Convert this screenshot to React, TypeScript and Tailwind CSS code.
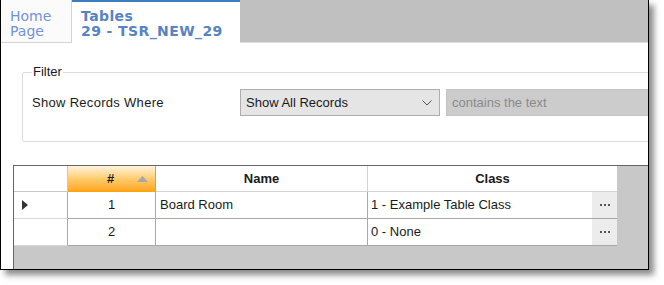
import React from 'react';

const rows = [
  { id: 1, name: 'Board Room', cls: '1 - Example Table Class', current: true },
  { id: 2, name: '', cls: '0 - None', current: false },
];

function Dots() {
  return (
    <div className="w-[25px] h-full bg-[#ececec] flex items-center justify-center gap-[2px]">
      <span className="w-[2px] h-[2px] bg-[#555]" />
      <span className="w-[2px] h-[2px] bg-[#555]" />
      <span className="w-[2px] h-[2px] bg-[#555]" />
    </div>
  );
}

export default function App() {
  return (
    <div className="w-[664px] h-[285px] bg-white">
      <div className="w-[649px] h-[270px] border-l border-r border-b border-black bg-white overflow-hidden flex flex-col shadow-[5px_5px_6px_rgba(0,0,0,0.45)] font-['Liberation_Sans',Arial,sans-serif] text-[13px] text-[#1a1a1a]">
        {/* tabs */}
        <div className="flex h-[43px] shrink-0 font-['DejaVu_Sans',Verdana,sans-serif] text-[14px] leading-[15px]">
          <div className="w-[71px] bg-[#fbfbfb] border-r border-b border-[#d4d4d4] pl-[9px] pt-[9px] text-[#7393d6]">
            <div>Home</div>
            <div>Page</div>
          </div>
          <div className="w-[168px] bg-white border-t-2 border-[#3d7cc0] pl-[9px] pt-[7px] font-bold text-[#5683c2] tracking-[0.4px]">
            <div>Tables</div>
            <div>29 - TSR_NEW_29</div>
          </div>
          <div className="flex-1 bg-[#c0c0c0] border-b border-[#dedede]" />
        </div>

        {/* filter */}
        <fieldset className="ml-[21px] mt-[22px] w-[700px] h-[77px] border border-[#dcdcdc] rounded-[2px] pl-[9px] shrink-0">
          <legend className="px-[1px] leading-[14px]">Filter</legend>
          <div className="flex items-center mt-[10px]">
            <span className="w-[208px] tracking-[0.3px]">Show Records Where</span>
            <div className="w-[200px] h-[27px] bg-[#e5e5e5] border border-[#adadad] flex items-center justify-between pl-[5px] pr-[7px]">
              <span>Show All Records</span>
              <svg width="10" height="6" viewBox="0 0 10 6" fill="none" stroke="#555" strokeWidth="1">
                <path d="M0.5 0.5 L5 5 L9.5 0.5" />
              </svg>
            </div>
            <div className="ml-[6px] w-[220px] h-[27px] bg-[#cccccc] border border-[#c4c4c4] flex items-center pl-[5px] text-[#8a8a8a]">
              contains the text
            </div>
          </div>
        </fieldset>

        {/* grid */}
        <div className="ml-[12px] mt-[23px] flex-1 bg-[#c8c8c8] border-t border-l border-[#666666] flex flex-col">
          <div className="flex h-[26px] font-bold">
            <div className="w-[54px] bg-white border-r border-b border-[#c8c8c8]" />
            <div className="w-[88px] border-r border-[#a8a8a8] bg-gradient-to-b from-[#fff3dc] via-[#ffcb6a] to-[#ffa200] relative flex items-center justify-center">
              <span className="-ml-[2px]">#</span>
              <svg className="absolute right-[7px] top-[10px]" width="11" height="6" viewBox="0 0 11 6">
                <path d="M0 6 L5.5 0 L11 6 Z" fill="#a6a6a6" />
              </svg>
            </div>
            <div className="w-[212px] bg-white border-r border-b border-[#d4d4d4] flex items-center justify-center">Name</div>
            <div className="w-[249px] bg-white border-b border-[#d4d4d4] flex items-center justify-center">Class</div>
          </div>
          {rows.map((r) => (
            <div key={r.id} className="flex h-[27px]">
              <div className="w-[54px] bg-white border-r border-[#a8a8a8] border-b border-b-[#d8d8d8] flex items-center pl-[8px]">
                {r.current && (
                  <svg width="6" height="10" viewBox="0 0 6 10">
                    <path d="M0 0 L6 5 L0 10 Z" fill="#333" />
                  </svg>
                )}
              </div>
              <div className="w-[88px] bg-white border-r border-b border-[#a8a8a8] flex items-center justify-center">{r.id}</div>
              <div className="w-[212px] bg-white border-r border-b border-[#a8a8a8] flex items-center pl-[4px]">{r.name}</div>
              <div className="w-[249px] bg-white border-b border-[#a8a8a8] flex items-center">
                <span className="flex-1 pl-[3px]">{r.cls}</span>
                <Dots />
              </div>
            </div>
          ))}
        </div>
      </div>
    </div>
  );
}
